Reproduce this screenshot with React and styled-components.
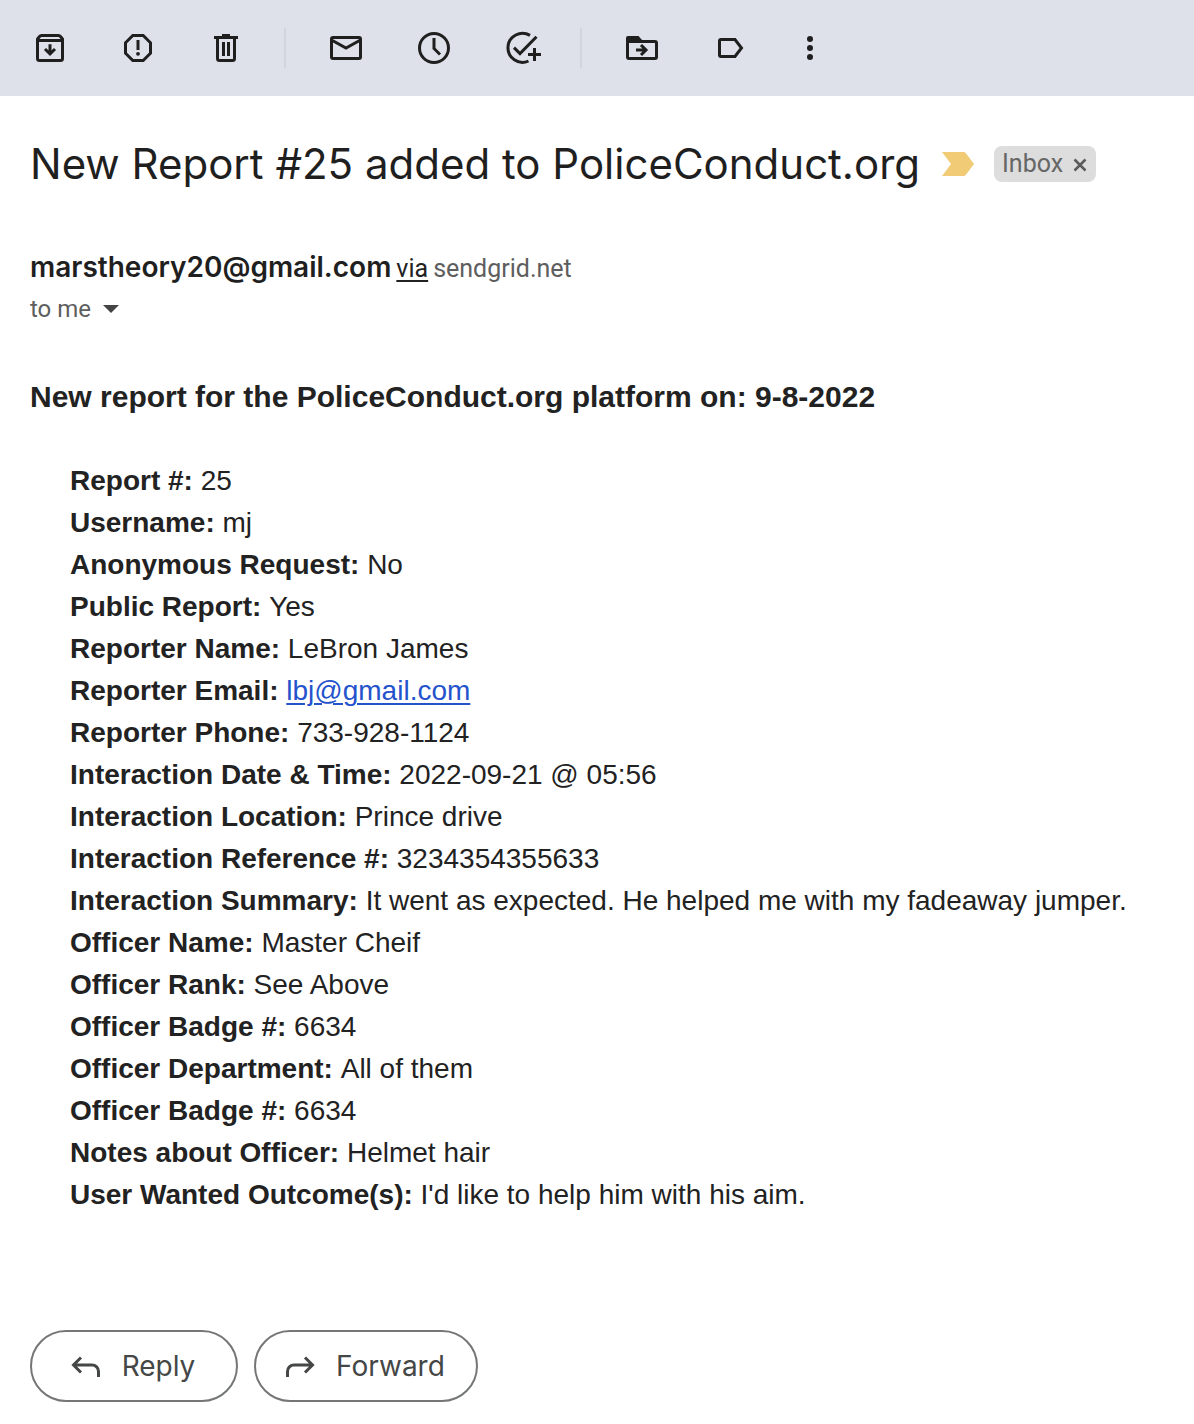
import React from "react";
import styled, { createGlobalStyle } from "styled-components";

const GlobalStyle = createGlobalStyle`
  *, *::before, *::after { box-sizing: border-box; }
  body {
    margin: 0;
    background: #fff;
    color: #222;
    font-family: "Liberation Sans", Arial, sans-serif;
  }
  button { font: inherit; color: inherit; margin: 0; padding: 0; border: 0; background: none; cursor: pointer; }
`;

const uiFont = `Roboto, "Liberation Sans", sans-serif`;
const displayFont = `Inter, "Liberation Sans", sans-serif`;

const Toolbar = styled.header`
  display: flex;
  align-items: center;
  height: 96px;
  padding-left: 6px;
  background: #dee1e9;
  color: #1f1f1f;
`;

const ToolGroup = styled.div`
  display: flex;
  align-items: center;

  & + & {
    margin-left: 14px;
  }

  & + &::before {
    content: "";
    width: 2px;
    height: 40px;
    margin-right: 16px;
    background: #d2d5de;
  }
`;

const ToolButton = styled.button`
  display: flex;
  align-items: center;
  justify-content: center;
  width: ${(p) => (p.$narrow ? 72 : 88)}px;
  height: 80px;
`;

const Glyph = styled.svg`
  display: block;
  flex: none;
  width: 40px;
  height: 40px;
  fill: none;
  stroke: currentColor;
  stroke-width: 3;
  overflow: visible;

  .solid {
    fill: currentColor;
    stroke: none;
  }
`;

const Message = styled.main`
  padding: 40px 30px 22px;
`;

const SubjectRow = styled.div`
  display: flex;
  align-items: center;
  min-height: 56px;
`;

const Subject = styled.h1`
  margin: 0;
  color: #1f1f1f;
  font: 400 42px/56px ${displayFont};
`;

const MarkerButton = styled.button`
  flex: none;
  margin: 0 20px 0 22px;

  svg {
    display: block;
    width: 32px;
    height: 24px;
    fill: #f1cb75;
  }
`;

const Chip = styled.span`
  display: flex;
  flex: none;
  align-items: center;
  gap: 10px;
  height: 36px;
  padding: 0 9px 0 8px;
  border-radius: 8px;
  background: #ddd;
  color: #666;
  font: 400 25px/36px ${uiFont};
`;

const ChipRemove = styled.button`
  svg {
    display: block;
    width: 14px;
    height: 14px;
    margin-top: 2px;
    fill: none;
    stroke: #5a5a5a;
    stroke-width: 2.5;
  }
`;

const SenderBlock = styled.div`
  margin-top: 55px;
  color: #5e5e5e;
  font: 400 25px/40px ${uiFont};
`;

const SenderLine = styled.div`
  display: flex;
  flex-wrap: wrap;
  align-items: baseline;
  gap: 0 5px;
`;

const SenderName = styled.span`
  color: #1f1f1f;
  font: 600 28px/40px ${displayFont};
`;

const ViaLink = styled.a`
  color: #222;
  text-decoration: underline;
  text-decoration-thickness: 2px;
  text-underline-offset: 3px;
`;

const RecipientButton = styled.button`
  display: flex;
  align-items: center;
  gap: 12px;
  font: 400 24px/40px ${uiFont};

  svg {
    display: block;
    width: 16px;
    height: 8px;
    fill: #444;
  }
`;

const ReportHeading = styled.h2`
  margin: 47px 0 42px;
  font-size: 30px;
  font-weight: 700;
  line-height: 42px;
`;

const ReportList = styled.dl`
  margin: 0;
  padding-left: 40px;
  font-size: 28px;
  line-height: 42px;
`;

const ReportRow = styled.div`
  dt, dd {
    display: inline;
    margin: 0;
  }

  dt {
    font-weight: 700;
  }

  a {
    color: #2453cc;
    text-underline-offset: 3px;
    text-decoration-thickness: 2px;
  }
`;

const Actions = styled.footer`
  display: flex;
  flex-wrap: wrap;
  gap: 16px;
  margin-top: 114px;
`;

const ActionButton = styled.button`
  && {
    display: flex;
    align-items: center;
    justify-content: center;
    gap: 16px;
    min-width: 208px;
    height: 72px;
    padding: 0 31px 0 24px;
    border: 2px solid #747775;
    border-radius: 36px;
    color: #444746;
    font: 400 28px/40px ${displayFont};
  }
`;

const toolGroups = [
  [
    {
      label: "Archive",
      art: (
        <>
          <path d="M7.5 12.5V30.5a2 2 0 0 0 2 2h21a2 2 0 0 0 2-2V12.5V11l-2-2.500a2.500 2.500 0 0 0-2-1h-17a2.500 2.500 0 0 0-2 1l-2 2.500z" />
          <path d="M7.5 12.5h25M20 16.300V26M15 21l5 5 5-5" />
        </>
      ),
    },
    {
      label: "Report spam",
      art: (
        <>
          <path d="M14.800 7.500h10.400l7.300 7.300v10.400l-7.300 7.300H14.800l-7.300-7.300V14.800z" />
          <path d="M20 12v10" />
          <circle className="solid" cx="20" cy="25.800" r="1.900" />
        </>
      ),
    },
    {
      label: "Delete",
      art: (
        <>
          <path d="M11.500 10v20.500a2 2 0 0 0 2 2h13a2 2 0 0 0 2-2V10M17.500 14v14M22.500 14v14" />
          <path className="solid" d="M8 8h8V6h8v2h8v3H8z" />
        </>
      ),
    },
  ],
  [
    {
      label: "Mark as unread",
      art: (
        <>
          <rect x="5.500" y="9.500" width="29" height="21" rx="1.500" />
          <path d="M5.500 12l14.500 8L34.500 12" />
        </>
      ),
    },
    {
      label: "Snooze",
      art: (
        <>
          <circle cx="20" cy="20" r="14.500" />
          <path d="M20 10v10.500l6 6" />
        </>
      ),
    },
    {
      label: "Add to tasks",
      art: (
        <>
          <path d="M28 7.400A14.500 14.500 0 1 0 26.500 33" />
          <path d="M12 19.600l6 6L34.500 8.800M32.500 20v13M26 26.500h13" />
        </>
      ),
    },
  ],
  [
    {
      label: "Move to",
      art: (
        <>
          <rect x="5.500" y="13.500" width="29" height="17" rx="1.500" />
          <path className="solid" d="M4 14v-4a2 2 0 0 1 2-2h10.500l4 4.500V14z" />
          <path d="M14 22h10M19 17l5 5-5 5" />
        </>
      ),
    },
    {
      label: "Labels",
      art: <path d="M11 11.500h14l6.500 8.500-6.500 8.500H11a1.500 1.500 0 0 1-1.500-1.500V13a1.500 1.500 0 0 1 1.500-1.500z" />,
    },
    {
      label: "More",
      narrow: true,
      art: (
        <>
          <circle className="solid" cx="20" cy="11" r="3" />
          <circle className="solid" cx="20" cy="20" r="3" />
          <circle className="solid" cx="20" cy="29" r="3" />
        </>
      ),
    },
  ],
];

const fields = [
  ["Report #:", "25"],
  ["Username:", "mj"],
  ["Anonymous Request:", "No"],
  ["Public Report:", "Yes"],
  ["Reporter Name:", "LeBron James"],
  ["Reporter Email:", <a href="mailto:lbj@gmail.com">lbj@gmail.com</a>],
  ["Reporter Phone:", "733-928-1124"],
  ["Interaction Date & Time:", "2022-09-21 @ 05:56"],
  ["Interaction Location:", "Prince drive"],
  ["Interaction Reference #:", "3234354355633"],
  ["Interaction Summary:", "It went as expected. He helped me with my fadeaway jumper."],
  ["Officer Name:", "Master Cheif"],
  ["Officer Rank:", "See Above"],
  ["Officer Badge #:", "6634"],
  ["Officer Department:", "All of them"],
  ["Officer Badge #:", "6634"],
  ["Notes about Officer:", "Helmet hair"],
  ["User Wanted Outcome(s):", "I'd like to help him with his aim."],
];

export default function App() {
  return (
    <>
      <GlobalStyle />
      <Toolbar>
        {toolGroups.map((group, i) => (
          <ToolGroup key={i}>
            {group.map((tool) => (
              <ToolButton key={tool.label} type="button" aria-label={tool.label} $narrow={tool.narrow}>
                <Glyph viewBox="0 0 40 40" aria-hidden="true">{tool.art}</Glyph>
              </ToolButton>
            ))}
          </ToolGroup>
        ))}
      </Toolbar>

      <Message>
        <SubjectRow>
          <Subject>New Report #25 added to PoliceConduct.org</Subject>
          <MarkerButton type="button" aria-label="Important">
            <svg viewBox="0 0 32 24" aria-hidden="true">
              <path d="M0 0h21.500a3 3 0 0 1 2.400 1.200L32 12l-8.100 10.800a3 3 0 0 1-2.400 1.200H0l9-12z" />
            </svg>
          </MarkerButton>
          <Chip>
            Inbox
            <ChipRemove type="button" aria-label="Remove Inbox label">
              <svg viewBox="0 0 14 14" aria-hidden="true">
                <path d="M1.500 1.500l11 11M12.500 1.500l-11 11" />
              </svg>
            </ChipRemove>
          </Chip>
        </SubjectRow>

        <SenderBlock>
          <SenderLine>
            <SenderName>marstheory20@gmail.com</SenderName>
            <ViaLink href="#via">via</ViaLink>
            <span>sendgrid.net</span>
          </SenderLine>
          <RecipientButton type="button">
            to me
            <svg viewBox="0 0 16 8" aria-hidden="true">
              <path d="M0 0h16L8 8z" />
            </svg>
          </RecipientButton>
        </SenderBlock>

        <ReportHeading>New report for the PoliceConduct.org platform on: 9-8-2022</ReportHeading>
        <ReportList>
          {fields.map(([name, value], i) => (
            <ReportRow key={i}>
              <dt>{name}</dt> <dd>{value}</dd>
            </ReportRow>
          ))}
        </ReportList>

        <Actions>
          <ActionButton type="button">
            <Glyph viewBox="0 0 40 40" aria-hidden="true">
              <path d="M15 11.500L7.500 19l7.500 7.500M7.500 19H26a6.500 6.500 0 0 1 6.500 6.500V31" />
            </Glyph>
            Reply
          </ActionButton>
          <ActionButton type="button">
            <Glyph viewBox="0 0 40 40" aria-hidden="true">
              <path d="M25 11.500l7.500 7.500-7.500 7.500M32.500 19H14a6.500 6.500 0 0 0-6.500 6.500V31" />
            </Glyph>
            Forward
          </ActionButton>
        </Actions>
      </Message>
    </>
  );
}
